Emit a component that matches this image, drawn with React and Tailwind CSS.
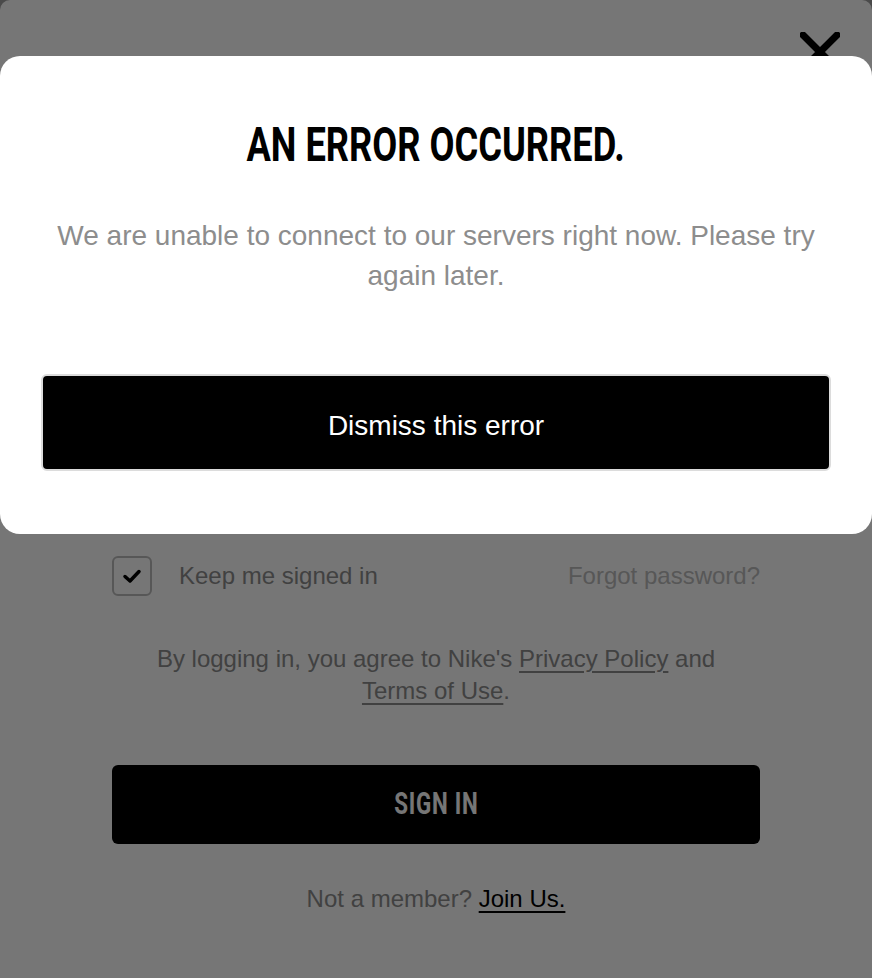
import React from "react";

const condensed = { fontFamily: 'Roboto, "DejaVu Sans Condensed", sans-serif' };

const CloseIcon = () => (
  <svg width="40" height="40" viewBox="0 0 40 40" fill="none">
    <path d="M3 3 L37 37 M37 3 L3 37" stroke="#000" strokeWidth="7" strokeLinecap="square" />
  </svg>
);

const CheckIcon = () => (
  <svg width="22" height="22" viewBox="0 0 22 22" fill="none">
    <path d="M4 11.5 L9 16 L18 6.5" stroke="#000" strokeWidth="3.5" strokeLinecap="round" strokeLinejoin="round" />
  </svg>
);

export default function App() {
  return (
    <div className="relative h-[978px] w-[872px] overflow-hidden bg-[#a0a0a0] font-['Liberation_Sans',Arial,sans-serif]">
      {/* login page underneath */}
      <div className="flex h-full flex-col rounded-t-[10px] bg-white">
        <div className="flex justify-end pr-[32px] pt-[32px]">
          <button className="h-[40px] w-[40px]">
            <CloseIcon />
          </button>
        </div>
        <div className="h-[482px]" />
        <div className="mx-[112px] flex items-center justify-between pt-[2px]">
          <label className="flex items-center gap-[27px]">
            <span className="flex h-[40px] w-[40px] items-center justify-center rounded-[6px] border-2 border-[#bcbcbc]">
              <CheckIcon />
            </span>
            <span className="text-[24px] text-[#8d8d8d]">Keep me signed in</span>
          </label>
          <a className="text-[24px] text-[#bcbcbc]">Forgot password?</a>
        </div>
        <p className="mx-[112px] mt-[47px] text-center text-[24px] leading-[32px] text-[#8d8d8d]">
          By logging in, you agree to Nike's{" "}
          <span className="whitespace-nowrap underline underline-offset-4">Privacy Policy</span> and{" "}
          <span className="whitespace-nowrap underline underline-offset-4">Terms of Use</span>.
        </p>
        <button className="mx-[112px] mt-[58px] h-[79px] rounded-[6px] bg-black text-white">
          <span className="inline-block scale-x-[0.72] text-[31px] font-bold tracking-[1px]" style={condensed}>
            SIGN IN
          </span>
        </button>
        <p className="mt-[37px] text-center text-[24px] text-[#8d8d8d]">
          Not a member? <span className="text-black underline underline-offset-4">Join Us.</span>
        </p>
      </div>

      {/* dim overlay */}
      <div className="absolute inset-0 bg-black/[0.537]" />

      {/* error dialog */}
      <div className="absolute left-0 right-0 top-[56px] flex h-[478px] flex-col items-center rounded-[20px] bg-white px-[41px]">
        <h2 className="mt-[64px] inline-block scale-x-[0.74] text-[49px] font-bold leading-none text-black" style={condensed}>
          AN ERROR OCCURRED.
        </h2>
        <p className="mt-[47px] px-[8px] text-center text-[28px] leading-[40px] text-[#8d8d8d]">
          We are unable to connect to our servers right now. Please try again later.
        </p>
        <button className="mt-[78px] h-[97px] w-full rounded-[6px] border-2 border-[#dcdcdc] bg-black pt-[6px] text-[28px] text-white">
          Dismiss this error
        </button>
      </div>
    </div>
  );
}
